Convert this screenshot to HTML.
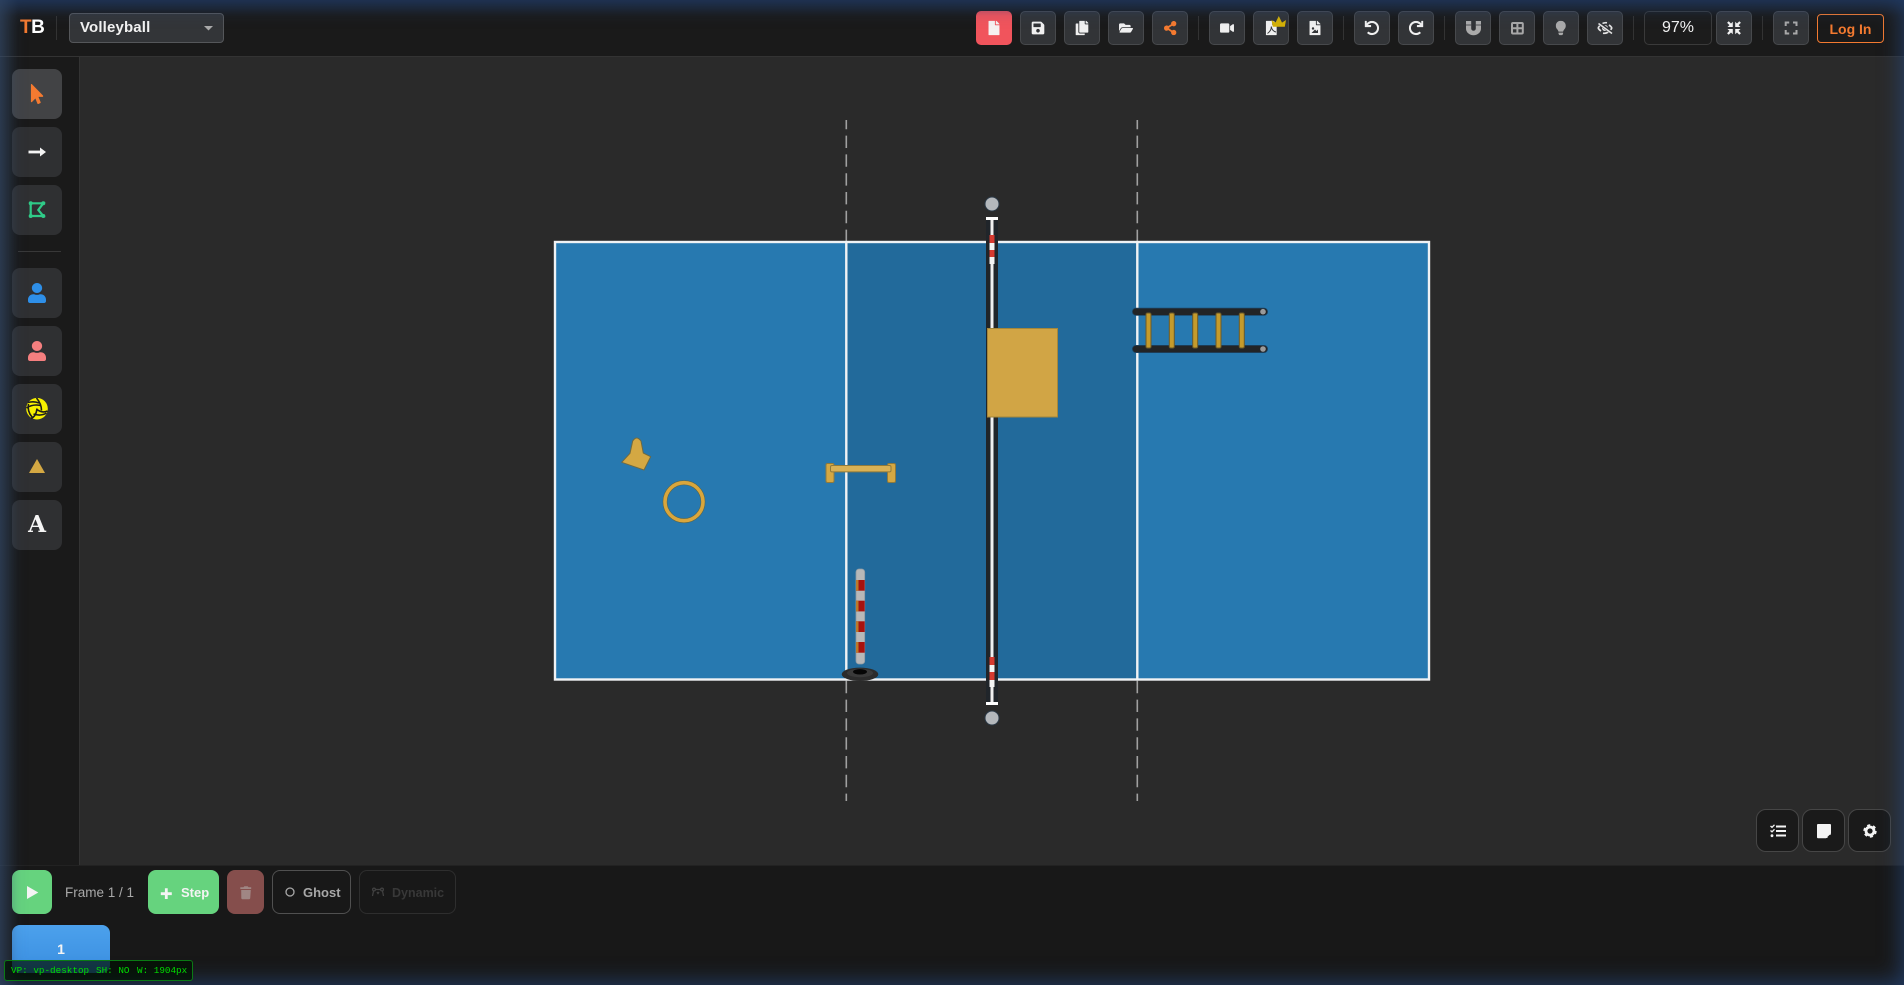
<!DOCTYPE html>
<html lang="en"><head><meta charset="utf-8"><title>Volleyball</title>
<style>
html,body{margin:0;padding:0;width:1904px;height:985px;overflow:hidden;background:#2a2a2a;font-family:"Liberation Sans",sans-serif}
.a{position:absolute;box-sizing:border-box}
.b{position:absolute;box-sizing:border-box;top:11px;width:36px;height:34px;background:#323437;border:1px solid #47494c;border-radius:5px}
.t{position:absolute;box-sizing:border-box;left:12px;width:50px;height:50px;background:#2f3032;border-radius:8px}
.s{position:absolute;top:16px;width:1px;height:24px;background:#333}
.r{position:absolute;box-sizing:border-box;top:809px;width:43px;height:43px;background:#1a1a1a;border:1px solid #464646;border-radius:10px}
.x{position:absolute;white-space:nowrap}
</style></head><body>
<div class="a" style="left:0;top:0;width:1904px;height:57px;background:#1a1a1a;border-bottom:1px solid #333"></div>
<div class="a" style="left:0;top:57px;width:80px;height:808px;background:#1a1a1a;border-right:1px solid #333"></div>
<div class="a" style="left:0;top:865px;width:1904px;height:120px;background:#181818;border-top:1px solid #222"></div>

<div class="x" style="left:20px;top:16px;font-size:19px;line-height:24px;font-weight:bold;letter-spacing:-.5px;color:#fff"><span style="color:#f47a30">T</span>B</div>
<div class="a" style="left:56px;top:16px;width:1px;height:24px;background:#333"></div>
<div class="a" style="left:69px;top:13px;width:155px;height:30px;background:#333538;border:1px solid #55575a;border-radius:4px"></div>
<div class="x" style="left:80px;top:19px;font-size:15px;line-height:18px;font-weight:bold;color:#f2f2f2;letter-spacing:.15px">Volleyball</div>
<div class="b" style="left:976px;background:#f1545c;border-color:#f1545c"></div>
<div class="b" style="left:1020px"></div><div class="b" style="left:1064px"></div><div class="b" style="left:1108px"></div><div class="b" style="left:1152px"></div>
<div class="s" style="left:1198px"></div>
<div class="b" style="left:1209px"></div><div class="b" style="left:1253px"></div><div class="b" style="left:1297px"></div>
<div class="s" style="left:1343px"></div>
<div class="b" style="left:1354px"></div><div class="b" style="left:1398px"></div>
<div class="s" style="left:1444px"></div>
<div class="b" style="left:1455px"></div><div class="b" style="left:1499px"></div><div class="b" style="left:1543px"></div><div class="b" style="left:1587px"></div>
<div class="s" style="left:1633px"></div>
<div class="b" style="left:1644px;width:68px;background:#1c1c1c;border-color:#3a3a3a"></div>
<div class="x" style="left:1644px;width:68px;text-align:center;top:18px;font-size:16px;line-height:20px;color:#f2f2f2">97%</div>
<div class="b" style="left:1716px"></div>
<div class="s" style="left:1762px"></div>
<div class="b" style="left:1773px"></div>
<div class="a" style="left:1817px;top:14px;width:67px;height:29px;border:1.5px solid #f47a30;border-radius:4px"></div>
<div class="x" style="left:1817px;width:67px;text-align:center;top:20px;font-size:14px;line-height:18px;font-weight:bold;color:#f47a30">Log In</div>

<div class="t" style="top:69px;background:#424345"></div>
<div class="t" style="top:127px"></div><div class="t" style="top:185px"></div>
<div class="a" style="left:18px;top:251px;width:43px;height:1px;background:#383838"></div>
<div class="t" style="top:268px"></div><div class="t" style="top:326px"></div><div class="t" style="top:384px"></div><div class="t" style="top:442px"></div><div class="t" style="top:500px"></div>
<div class="x" style="left:12px;width:50px;text-align:center;top:509px;font-family:'DejaVu Serif',serif;font-weight:bold;font-size:23px;line-height:32px;color:#f5f5f5">A</div>

<div class="a" style="left:12px;top:870px;width:40px;height:44px;background:#66d37e;border-radius:8px"></div>
<div class="x" style="left:65px;top:884px;font-size:13.500px;line-height:17px;color:#a8a8a8">Frame 1 / 1</div>
<div class="a" style="left:148px;top:870px;width:71px;height:44px;background:#66d37e;border-radius:8px"></div>
<div class="x" style="left:181px;top:885px;font-size:13px;line-height:16px;font-weight:bold;color:#f4f4f4">Step</div>
<div class="a" style="left:227px;top:870px;width:37px;height:44px;background:#854e4c;border-radius:8px"></div>
<div class="a" style="left:272px;top:870px;width:79px;height:44px;border:1px solid #505050;border-radius:8px"></div>
<div class="x" style="left:303px;top:885px;font-size:13px;line-height:16px;font-weight:bold;color:#a8a8a8">Ghost</div>
<div class="a" style="left:359px;top:870px;width:97px;height:44px;border:1px solid #2e2e2e;border-radius:8px"></div>
<div class="x" style="left:392px;top:885px;font-size:12.500px;line-height:16px;font-weight:bold;color:#383838">Dynamic</div>
<div class="a" style="left:12px;top:925px;width:98px;height:48px;background:linear-gradient(#4ca1ec,#3a8ee0);border-radius:8px"></div>
<div class="x" style="left:12px;width:98px;text-align:center;top:941px;font-size:14px;line-height:17px;font-weight:bold;color:#f4f4f4">1</div>

<div class="r" style="left:1756px"></div><div class="r" style="left:1802px"></div><div class="r" style="left:1848px"></div>

<svg class="a" style="left:0;top:0" width="1904" height="985" viewBox="0 0 1904 985">
<defs>
<path id="pf" d="M224 136V0H24C10.7 0 0 10.7 0 24v464c0 13.3 10.7 24 24 24h336c13.3 0 24-10.7 24-24V160H248c-13.2 0-24-10.8-24-24zm160-14.1v6.1H256V0h6.1c6.4 0 12.5 2.5 17 7l97.9 98c4.5 4.5 7 10.6 7 16.9z"/>
<path id="pu" d="M224 256c70.7 0 128-57.3 128-128S294.7 0 224 0 96 57.3 96 128s57.3 128 128 128zm89.6 32h-16.7c-22.2 10.2-46.9 16-72.9 16s-50.6-5.8-72.9-16h-16.7C60.2 288 0 348.2 0 422.4V464c0 26.5 21.5 48 48 48h352c26.5 0 48-21.5 48-48v-41.6c0-74.2-60.2-134.4-134.4-134.4z"/>
<path id="pundo" d="M212.333 224.333H12c-6.627 0-12-5.373-12-12V12C0 5.373 5.373 0 12 0h48c6.627 0 12 5.373 12 12v78.112C117.773 39.279 184.26 7.47 258.175 8.007c136.906.994 246.448 111.623 246.157 248.532C504.041 393.258 393.12 504 256.333 504c-64.089 0-122.496-24.313-166.51-64.215-5.099-4.622-5.334-12.554-.467-17.42l33.967-33.967c4.474-4.474 11.662-4.717 16.401-.525C170.76 415.336 211.58 432 256.333 432c97.268 0 176-78.716 176-176 0-97.267-78.716-176-176-176-58.496 0-110.28 28.476-142.274 72.333h98.274c6.627 0 12 5.373 12 12v48c0 6.627-5.373 12-12 12z"/>
</defs>

<!-- dropdown caret -->
<path d="M204 26h9l-4.500 4.500z" fill="#aaa"/>

<!-- top icons -->
<svg x="988.500" y="20.700" width="11" height="14.600" viewBox="0 0 384 512" fill="#f6f1f1"><use href="#pf"/></svg>
<svg x="1031.600" y="20.700" width="12.800" height="14.600" viewBox="0 0 448 512" fill="#f0f0f0"><path d="M433.941 129.941l-83.882-83.882A48 48 0 0 0 316.118 32H48C21.49 32 0 53.49 0 80v352c0 26.51 21.49 48 48 48h352c26.51 0 48-21.49 48-48V163.882a48 48 0 0 0-14.059-33.941zM224 416c-35.346 0-64-28.654-64-64 0-35.346 28.654-64 64-64s64 28.654 64 64c0 35.346-28.654 64-64 64zm96-304.520V212c0 6.627-5.373 12-12 12H76c-6.627 0-12-5.373-12-12V108c0-6.627 5.373-12 12-12h228.520c3.183 0 6.235 1.264 8.485 3.515l3.480 3.480A11.996 11.996 0 0 1 320 111.480z"/></svg>
<svg x="1075.600" y="20.700" width="12.800" height="14.600" viewBox="0 0 448 512" fill="#f0f0f0"><path d="M320 448v40c0 13.255-10.745 24-24 24H24c-13.255 0-24-10.745-24-24V120c0-13.255 10.745-24 24-24h72v296c0 30.879 25.121 56 56 56h168zm0-344V0H152c-13.255 0-24 10.745-24 24v368c0 13.255 10.745 24 24 24h272c13.255 0 24-10.745 24-24V128H344c-13.200 0-24-10.800-24-24zm120.971-31.029L375.029 7.029A24 24 0 0 0 358.059 0H352v96h96v-6.059a24 24 0 0 0-7.029-16.970z"/></svg>
<svg x="1119" y="21.800" width="14" height="12.400" viewBox="0 0 576 512" fill="#f0f0f0"><path d="M572.694 292.093L500.270 416.248A63.997 63.997 0 0 1 444.989 448H45.025c-18.523 0-30.064-20.093-20.731-36.093l72.424-124.155A64 64 0 0 1 152 256h399.964c18.523 0 30.064 20.093 20.730 36.093zM152 224h328v-48c0-26.510-21.490-48-48-48H272l-64-64H48C21.490 64 0 85.490 0 112v278.046l69.077-118.418C86.214 242.250 117.989 224 152 224z"/></svg>
<svg x="1164" y="21" width="12.400" height="14.200" viewBox="0 0 448 512" fill="#f47a30"><path d="M352 320c-22.608 0-43.387 7.819-59.790 20.895l-102.486-64.054a96.551 96.551 0 0 0 0-41.683l102.486-64.054C308.613 184.181 329.392 192 352 192c53.019 0 96-42.981 96-96S405.019 0 352 0s-96 42.981-96 96c0 7.158.79 14.130 2.276 20.841L155.790 180.895C139.387 167.819 118.608 160 96 160c-53.019 0-96 42.981-96 96s42.981 96 96 96c22.608 0 43.387-7.819 59.790-20.895l102.486 64.054A96.301 96.301 0 0 0 256 416c0 53.019 42.981 96 96 96s96-42.981 96-96-42.981-96-96-96z"/></svg>
<svg x="1220" y="21.800" width="14" height="12.400" viewBox="0 0 576 512" fill="#f0f0f0"><path d="M336.200 64H47.800C21.400 64 0 85.400 0 111.800v288.400C0 426.600 21.400 448 47.800 448h288.400c26.400 0 47.800-21.400 47.800-47.800V111.800c0-26.400-21.400-47.800-47.800-47.800zm189.400 37.700L416 177.300v157.400l109.600 75.500c21.200 14.600 50.400-.3 50.400-25.800V127.500c0-25.400-29.100-40.400-50.400-25.800z"/></svg>
<svg x="1265.800" y="20.700" width="11" height="14.600" viewBox="0 0 384 512" fill="#f0f0f0"><use href="#pf"/></svg>
<path d="M1267.500 33.500C1270.500 31.500 1271.500 28.500 1271.200 26.500 1271.800 29.500 1273.800 31.500 1276 32" fill="none" stroke="#3a3c3f" stroke-width="1"/>
<path d="M1272.800 26.700L1271.500 20 1275.500 22.600 1278.800 16 1282 22.600 1286 20 1284.800 26.700Z" fill="#d4b106"/>
<svg x="1309.500" y="20.700" width="11" height="14.600" viewBox="0 0 384 512" fill="#f0f0f0"><use href="#pf"/></svg>
<circle cx="1313" cy="28.500" r="1.200" fill="#333538"/><path d="M1311.500 33l3.500-3.500 1.500 1.500 1.500-1.500V33z" fill="#333538"/>
<svg x="1364.700" y="20.700" width="14.600" height="14.600" viewBox="0 0 512 512" fill="#f0f0f0"><use href="#pundo"/></svg>
<svg x="1408.700" y="20.700" width="14.600" height="14.600" viewBox="0 0 512 512" fill="#f0f0f0"><use href="#pundo" transform="matrix(-1 0 0 1 512 0)"/></svg>
<path d="M1466 21h5.200v7.500a2.300 2.300 0 0 0 4.600 0V21h5.200v7.500a7.500 6.800 0 0 1-15 0z" fill="#aaa"/>
<path d="M1466 25h5.200M1475.800 25h5.200" stroke="#323437" stroke-width=".7"/>
<g fill="none" stroke="#a8a8a8" stroke-width="2"><rect x="1512" y="23" width="10.800" height="10.500" rx="1"/><path d="M1517.400 23v10.500M1512 28.200h10.800"/></g>
<svg x="1555.700" y="20.700" width="10.200" height="14.600" viewBox="0 0 352 512" fill="#aaa"><path d="M96.060 454.350c.01 6.290 1.870 12.450 5.360 17.690l17.090 25.690a31.990 31.990 0 0 0 26.640 14.280h61.710a31.990 31.990 0 0 0 26.640-14.280l17.090-25.690a31.989 31.989 0 0 0 5.360-17.690l.04-38.350H96.010l.05 38.350zM0 176c0 44.370 16.450 84.850 43.560 115.780 16.520 18.850 42.360 58.230 52.210 91.450.04.26.07.52.11.78h160.240c.04-.26.07-.51.11-.78 9.850-33.220 35.690-72.600 52.210-91.450C335.550 260.850 352 220.370 352 176 352 78.610 272.910-.3 175.450 0 73.440.31 0 82.970 0 176z"/></svg>
<path d="M1598 28c2.800-4.300 5.800-5.700 9-5.200M1612 28c-2.800 4.300-5.800 5.700-9 5.200M1601 31c-1.200-.7-2.200-1.800-3-3M1609 25c1.200.7 2.200 1.800 3 3" fill="none" stroke="#e4e4e4" stroke-width="1.700"/>
<circle cx="1605" cy="28" r="3" fill="#e4e4e4"/>
<path d="M1599 23l13 10" stroke="#323437" stroke-width="3.500"/><path d="M1598.500 23.500l13.500 10" stroke="#e4e4e4" stroke-width="1.600"/>
<g fill="#f2f2f2"><path d="M1732.800 27h-5.300l1.900-1.900-2.300-2.300 1.600-1.600 2.300 2.300 1.800-1.800zM1735.200 27V21.700l1.800 1.800 2.300-2.300 1.600 1.600-2.300 2.300 1.900 1.900zM1732.800 29h-5.300l1.900 1.900-2.300 2.300 1.600 1.600 2.300-2.300 1.800 1.800zM1735.200 29v5.300l1.800-1.800 2.300 2.300 1.600-1.600-2.300-2.300 1.900-1.900z"/></g>
<path d="M1785.700 26v-3.500h3.500M1793 22.500h3.500V26M1796.500 30v3.500H1793M1789.200 33.500h-3.500V30" fill="none" stroke="#a8a8a8" stroke-width="2"/>

<!-- court -->
<rect x="555" y="242" width="874" height="438" fill="#2779b0"/>
<rect x="846" y="242" width="291.500" height="438" fill="#226a9b"/>
<path d="M846.300 120V801M1137.300 120V801" stroke="#a0a0a0" stroke-width="1.600" stroke-dasharray="12.400 6.400" stroke-dashoffset="3.200" fill="none"/>
<rect x="555" y="242" width="874" height="437.500" fill="none" stroke="#f0f2f4" stroke-width="2.400"/>
<path d="M846.300 242V680M1137.300 242V680" stroke="#f0f2f4" stroke-width="2.400"/>

<!-- net -->
<rect x="986" y="218" width="12" height="486" fill="#20252a"/>
<rect x="990.500" y="218" width="3" height="486" fill="#f0f0f0"/>
<rect x="986" y="217" width="12" height="3" fill="#fff"/><rect x="986" y="702" width="12" height="3" fill="#fff"/>
<circle cx="992" cy="204" r="7" fill="#b4b8bc" stroke="#2c3a48" stroke-width="1"/>
<circle cx="992" cy="718" r="7" fill="#b4b8bc" stroke="#2c3a48" stroke-width="1"/>
<rect x="989.500" y="235" width="5" height="29" fill="#f4f4f4"/><rect x="989.500" y="235" width="5" height="8" fill="#d63a30"/><rect x="989.500" y="250" width="5" height="7" fill="#d63a30"/>
<rect x="989.500" y="657" width="5" height="30" fill="#f4f4f4"/><rect x="989.500" y="657" width="5" height="8" fill="#d63a30"/><rect x="989.500" y="672" width="5" height="8" fill="#d63a30"/>

<!-- yellow mat -->
<rect x="987.500" y="328.500" width="70" height="88.500" fill="#d1a545" stroke="#a4873b" stroke-width="1"/>

<!-- ladder -->
<g stroke-linecap="round"><path d="M1136 311.700H1264M1136 349H1264" stroke="#1d4565" stroke-width="8"/><path d="M1136 311.700H1264M1136 349H1264" stroke="#222426" stroke-width="6.500"/></g>
<circle cx="1263" cy="311.700" r="2.800" fill="#9a9a9a"/><circle cx="1263" cy="349" r="2.800" fill="#9a9a9a"/>
<g fill="#c49b2c" stroke="#6c5a28" stroke-width="1"><rect x="1146" y="313" width="5" height="35" rx="1.500"/><rect x="1169.300" y="313" width="5" height="35" rx="1.500"/><rect x="1192.700" y="313" width="5" height="35" rx="1.500"/><rect x="1216" y="313" width="5" height="35" rx="1.500"/><rect x="1239.300" y="313" width="5" height="35" rx="1.500"/></g>

<!-- cone -->
<path d="M632.700 441Q636.500 435 641 441L643.300 453 650.700 456.700 644 470 621.700 462.300 630 453.300Z" fill="#d4a843" stroke="#6f6a42" stroke-width="1" stroke-linejoin="round"/>
<!-- ring -->
<circle cx="684" cy="501.700" r="19" fill="none" stroke="#566650" stroke-width="4.800"/>
<circle cx="684" cy="501.700" r="19" fill="none" stroke="#d9a63c" stroke-width="3.600"/>
<!-- hurdle -->
<g fill="#d4a843" stroke="#8f7a3c" stroke-width="1"><rect x="826" y="463.500" width="8" height="19" rx="1.500"/><rect x="887.500" y="463.500" width="8" height="19" rx="1.500"/><rect x="830.500" y="465.500" width="60.500" height="6.400" rx="1.500" fill="#d9b155"/></g>
<!-- pole -->
<ellipse cx="860" cy="674.300" rx="18.300" ry="6.700" fill="#2c2c2c"/><ellipse cx="860" cy="673" rx="13" ry="4.200" fill="#3a3a3a"/><ellipse cx="860" cy="671.800" rx="7" ry="2.700" fill="#050505"/>
<rect x="856" y="569" width="8.700" height="95" rx="3" fill="#b8b8b8" stroke="#8f9aa2" stroke-width=".8"/>
<g fill="#a8120e"><rect x="856" y="580" width="8.700" height="10.700"/><rect x="856" y="600.700" width="8.700" height="10.700"/><rect x="856" y="621.300" width="8.700" height="10.700"/><rect x="856" y="642" width="8.700" height="10.700"/></g>
<g fill="#bc7a2a"><rect x="856" y="580" width="2.500" height="10.700"/><rect x="856" y="600.700" width="2.500" height="10.700"/><rect x="856" y="621.300" width="2.500" height="10.700"/><rect x="856" y="642" width="2.500" height="10.700"/></g>

<!-- sidebar icons -->
<svg x="30.800" y="84" width="12.500" height="20" viewBox="0 0 320 512" fill="#f47a30"><path d="M302.189 329.126H196.105l55.831 135.993c3.889 9.428-.555 19.999-9.444 23.999l-49.165 21.427c-9.165 4-19.443-.571-23.332-9.714l-53.053-129.136-86.664 89.138C18.729 472.710 0 463.554 0 447.977V18.299C0 1.899 19.921-6.096 30.277 5.443l284.412 292.542c11.472 11.179 3.007 31.141-12.500 31.141z"/></svg>
<path d="M28.500 152H41" stroke="#f4f4f4" stroke-width="2.800"/><path d="M40 147.500L46 152l-6 4.500z" fill="#f4f4f4"/>
<path d="M30.700 203.300H43.300L38.300 210 43.300 216H30.700Z" fill="none" stroke="#2fcb88" stroke-width="2.200"/>
<g fill="#2fcb88"><circle cx="30.700" cy="203.300" r="2"/><circle cx="43.300" cy="203.300" r="2"/><circle cx="43.300" cy="216" r="2"/><circle cx="30.700" cy="216" r="2"/></g>
<svg x="28" y="283" width="18" height="20" viewBox="0 0 448 512" preserveAspectRatio="none" fill="#2e8fe8"><use href="#pu"/></svg>
<svg x="28" y="341" width="18" height="20" viewBox="0 0 448 512" preserveAspectRatio="none" fill="#f57f7f"><use href="#pu"/></svg>
<circle cx="37" cy="408.700" r="10.800" fill="#f7f000"/>
<g fill="none" stroke="#1c1c1c" stroke-width="1.600"><path d="M36.500 398c3 3.500 5 8 5 12.500M28 402.500c3.500-1 7.500-1 11 .5M26.500 408c4.500-3 9.500-3.500 14-2.500M32 417c-3-3.500-4.500-8-3.500-13M37 408.500c-.5 4-1.500 8-6 10M37 409.500c3.500 2.500 7.500 3 10.500 1.500M33.500 414c4.500 1.500 9 1.500 13-1"/></g>
<path d="M37 459L45 473H29Z" fill="#d4a843"/>

<!-- bottom icons -->
<path d="M27 886L38.300 892.500 27 899Z" fill="#f4f4f4"/>
<path d="M166.300 888.300V899M160.800 893.700H171.800" stroke="#f4f4f4" stroke-width="2.800"/>
<path d="M243.500 887.200l.8-1h3.400l.8 1h2.700v1.800H240.300v-1.800zM241.200 890h9.600l-.6 8.300a1 1 0 0 1-1 .9h-6.900a1 1 0 0 1-1-.9z" fill="#a08684"/>
<circle cx="290" cy="892" r="4" fill="none" stroke="#a8a8a8" stroke-width="1.300"/>
<g fill="none" stroke="#424242" stroke-width="1.200"><circle cx="374" cy="889.500" r="1.400"/><circle cx="382" cy="889.500" r="1.400"/><path d="M375.500 889.500h5M373.500 891l-1 5M382.500 891l1 5M377 892l1 1.500 1-1.500"/></g>

<!-- bottom-right icons -->
<g fill="none" stroke="#f4f4f4"><path d="M1776 826.500h10M1776 831h10M1776 835.500h10" stroke-width="2"/><path d="M1770.500 826l1.500 1.300 2.500-2.500M1770.500 830.500l1.500 1.300 2.500-2.500" stroke-width="1.300"/></g><circle cx="1772" cy="835.700" r="1.400" fill="#f4f4f4"/>
<path d="M1818 824H1830a1 1 0 0 1 1 1V833.500L1826 838.200H1818a1 1 0 0 1-1-1V825a1 1 0 0 1 1-1z" fill="#f4f4f4"/>
<path d="M1827 838v-3.800h3.800" fill="none" stroke="#f4f4f4" stroke-width="1"/>
<circle cx="1870" cy="831" r="4" fill="none" stroke="#f4f4f4" stroke-width="2.800"/>
<circle cx="1870" cy="831" r="5.500" fill="none" stroke="#f4f4f4" stroke-width="2.400" stroke-dasharray="2.900 2.860"/>
</svg>

<!-- glow overlay -->
<div class="a" style="left:0;top:0;width:1904px;height:985px;pointer-events:none;box-shadow:inset 0 0 22px 3px rgba(38,78,138,.62)"></div>
<div class="a" style="left:0;top:0;width:1904px;height:16px;pointer-events:none;background:linear-gradient(rgba(30,60,110,.3),rgba(30,60,110,0))"></div>
<div class="a" style="left:0;top:0;width:18px;height:985px;pointer-events:none;background:linear-gradient(90deg,rgba(70,85,100,.3),rgba(70,85,100,0))"></div>

<!-- debug -->
<div class="a" style="left:4px;top:960px;width:189px;height:21px;background:rgba(0,15,0,.7);border:1px solid #0a7a14;border-radius:3px"></div>
<div class="x" style="left:11px;top:964px;font-family:'Liberation Mono',monospace;font-size:9.300px;line-height:13px;color:#00dd00">VP: vp-desktop</div>
<div class="x" style="left:96px;top:964px;font-family:'Liberation Mono',monospace;font-size:9.300px;line-height:13px;color:#00dd00">SH: NO</div>
<div class="x" style="left:137px;top:964px;font-family:'Liberation Mono',monospace;font-size:9.300px;line-height:13px;color:#00dd00">W: 1904px</div>
</body></html>
